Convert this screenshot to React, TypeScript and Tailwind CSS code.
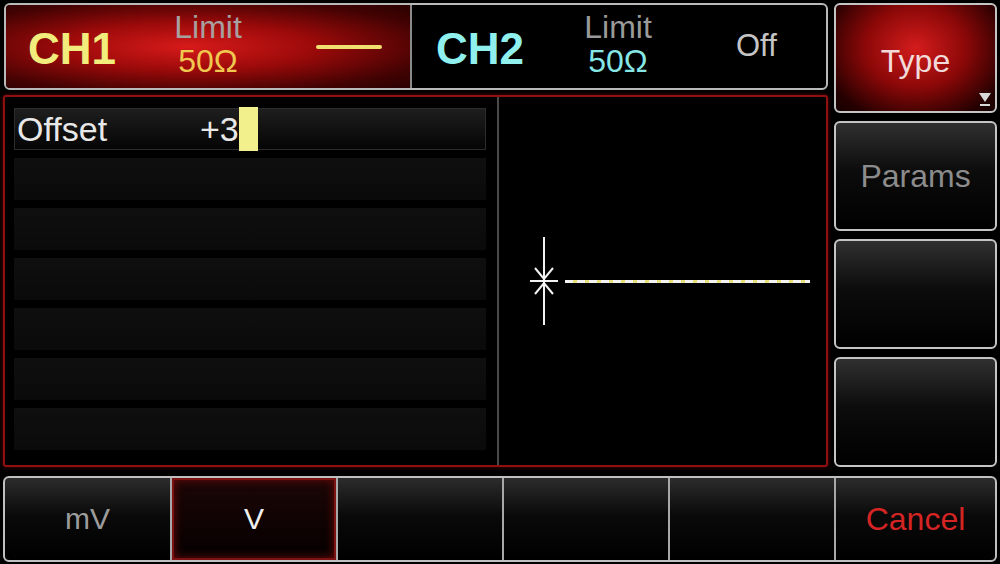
export default function App() {
  const rows = [0, 1, 2, 3, 4, 5, 6];
  return (
    <div className="w-[1000px] h-[564px] bg-black flex flex-col pt-[3px] px-[3px] font-['Liberation_Sans',Arial,sans-serif] overflow-hidden">
      <div className="flex h-[464px]">
        {/* LEFT COLUMN */}
        <div className="w-[825px] flex flex-col">
          {/* channel bar */}
          <div className="h-[87px] ml-[1px] border-2 border-[#b9b9b9] rounded-[6px] flex overflow-hidden bg-black">
            <div className="w-[404px] flex items-center bg-[radial-gradient(ellipse_at_45%_50%,#d71a1a_0%,#9c0a0a_40%,#420202_80%,#2a0101_100%)]">
              <div className="w-[160px] pl-[22px] text-[44px] font-bold text-[#f1ec7c] leading-none pt-[4px]">CH1</div>
              <div className="w-[84px] flex flex-col items-center leading-none -mt-[6px]">
                <span className="text-[32px] text-[#a8a0a0]">Limit</span>
                <span className="text-[32px] text-[#f0c850] mt-[2px]">50Ω</span>
              </div>
              <div className="w-[66px]" />
              <div className="w-[66px] h-[4px] bg-[#efe070] rounded-full" />
            </div>
            <div className="w-[2px] bg-[#8a8a8a]" />
            <div className="flex-1 flex items-center">
              <div className="w-[145px] pl-[24px] text-[44px] font-bold text-[#8ff0ee] leading-none pt-[4px]">CH2</div>
              <div className="w-[122px] flex flex-col items-center leading-none -mt-[6px]">
                <span className="text-[32px] text-[#9a9a9a]">Limit</span>
                <span className="text-[32px] text-[#86e6e6] mt-[2px]">50Ω</span>
              </div>
              <div className="pl-[57px] text-[31px] text-[#c4c4c4] leading-none -mt-[2px]">Off</div>
            </div>
          </div>

          {/* main panel */}
          <div className="mt-[5px] h-[372px] border-2 border-[#8e1010] rounded-[3px] shadow-[0_0_4px_#5a0000] flex">
            <div className="w-[492px] pl-[9px] pt-[11px] flex flex-col gap-[8px]">
              {rows.map((i) =>
                i === 0 ? (
                  <div key={i} className="h-[42px] w-[472px] border border-[#2c2c2c] bg-[linear-gradient(#1e1e1e,#050505)] flex items-center">
                    <span className="text-[34px] text-[#e8e8e8] leading-none pl-[2px] w-[185px]">Offset</span>
                    <span className="text-[34px] text-[#e8e8e8] leading-none">+3</span>
                    <span className="w-[19px] h-[44px] bg-[#f2f08c] -my-[2px]" />
                  </div>
                ) : (
                  <div key={i} className="h-[42px] w-[472px] bg-[linear-gradient(#0f0f0f,#0a0a0a)]" />
                )
              )}
            </div>
            <div className="w-[2px] bg-[#4a4a4a] h-full" />
            <div className="flex-1 flex items-center pl-[30px]">
              <svg width="30" height="88" viewBox="0 0 30 88" fill="none" stroke="#f2f2f2" strokeWidth="2">
                <path d="M15 0v88M1 44h28M6 31l9 11 9-11M6 57l9-11 9 11" />
              </svg>
              <div className="ml-[6px] w-[245px] h-[3px] bg-[repeating-linear-gradient(90deg,#f4f4f4_0px,#f4f4f4_8px,#e8e07a_8px,#e8e07a_12px)]" />
            </div>
          </div>
        </div>

        {/* RIGHT COLUMN */}
        <div className="ml-[6px] w-[163px] flex flex-col gap-[8px]">
          <div className="h-[110px] border-2 border-[#c4c4c4] rounded-[6px] bg-[radial-gradient(ellipse_at_50%_40%,#d41c1c_0%,#8c0808_45%,#250000_85%,#150000_100%)] flex items-center justify-center relative">
            <span className="text-[32px] text-[#f3dada] leading-none mt-[6px]">Type</span>
            <svg className="absolute right-[3px] bottom-[4px]" width="14" height="16" viewBox="0 0 14 16">
              <path d="M1 2h12L7 11z" fill="#d8d8d8" />
              <path d="M2 14h10" stroke="#d8d8d8" strokeWidth="2" />
            </svg>
          </div>
          <div className="h-[110px] border-2 border-[#c4c4c4] rounded-[6px] bg-[linear-gradient(#303030,#0c0c0c_45%,#000)] flex items-center justify-center">
            <span className="text-[32px] text-[#8c8c8c] leading-none">Params</span>
          </div>
          <div className="h-[110px] border-2 border-[#c4c4c4] rounded-[6px] bg-[linear-gradient(#303030,#0c0c0c_45%,#000)]" />
          <div className="h-[110px] border-2 border-[#c4c4c4] rounded-[6px] bg-[linear-gradient(#303030,#0c0c0c_45%,#000)]" />
        </div>
      </div>

      {/* BOTTOM BAR */}
      <div className="mt-[9px] h-[86px] border-2 border-[#c0c0c0] rounded-[6px] flex bg-[linear-gradient(#2c2c2c,#0a0a0a_45%,#000)] overflow-hidden">
        <div className="w-[165px] flex items-center justify-center">
          <span className="text-[30px] text-[#9c9c9c] leading-none">mV</span>
        </div>
        <div className="w-[2px] bg-[#a8a8a8]" />
        <div className="w-[164px] flex items-center justify-center border-2 border-[#7c1212] shadow-[inset_0_0_10px_#6a0a0a] bg-[linear-gradient(#1c0606,#050000)]">
          <span className="text-[30px] text-[#f0f0f0] leading-none">V</span>
        </div>
        <div className="w-[2px] bg-[#a8a8a8]" />
        <div className="w-[164px]" />
        <div className="w-[2px] bg-[#a8a8a8]" />
        <div className="w-[164px]" />
        <div className="w-[2px] bg-[#a8a8a8]" />
        <div className="w-[164px]" />
        <div className="w-[2px] bg-[#a8a8a8]" />
        <div className="flex-1 flex items-center justify-center">
          <span className="text-[32px] text-[#d42424] leading-none">Cancel</span>
        </div>
      </div>
    </div>
  );
}
